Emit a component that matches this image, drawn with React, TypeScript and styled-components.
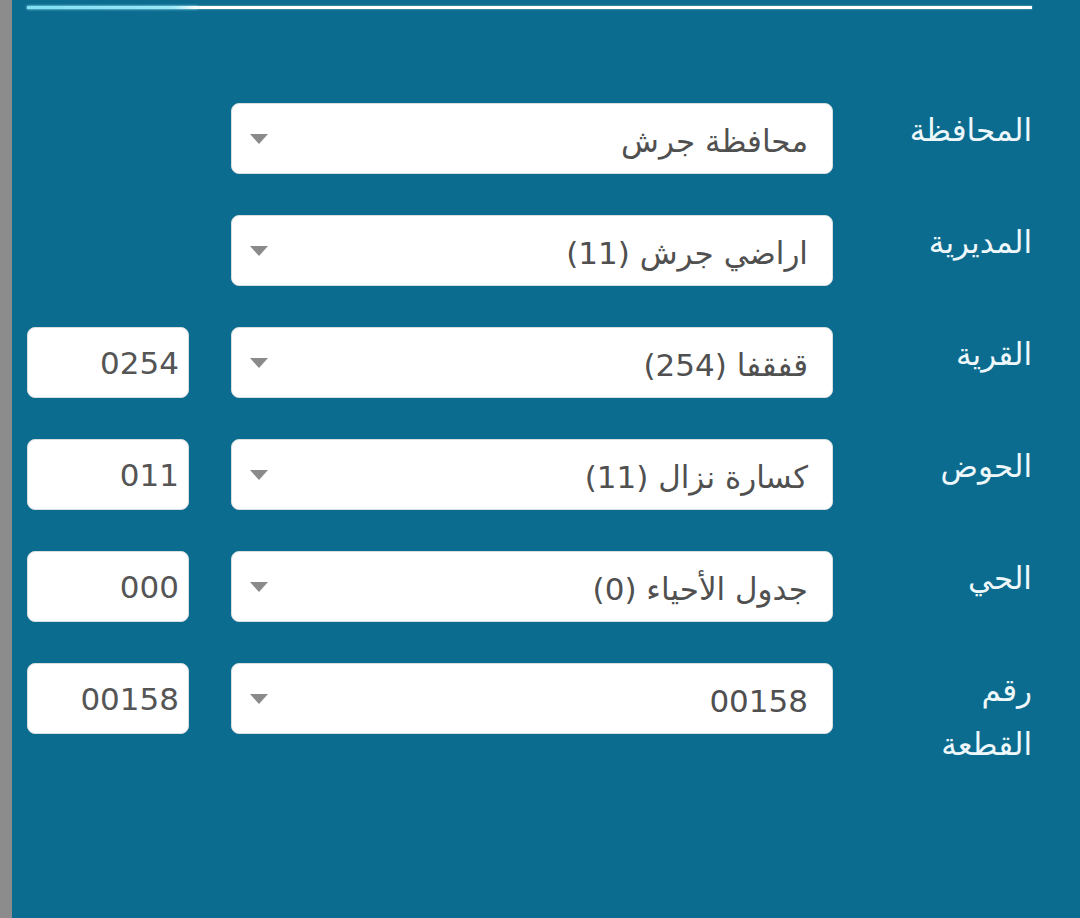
import React from "react";
import styled, { createGlobalStyle } from "styled-components";

const GlobalStyle = createGlobalStyle`
  html, body {
    margin: 0;
    padding: 0;
    background: #0b6c8f;
  }
  body {
    font-family: "DejaVu Sans", "Noto Sans", sans-serif;
  }
`;

const Shell = styled.div`
  display: flex;
  min-height: 918px;
  width: 1080px;
  background: #0b6c8f;
`;

const SideStrip = styled.div`
  width: 12px;
  flex: none;
  background: #8c8c8c;
`;

const Panel = styled.main`
  flex: 1;
  padding: 6px 48px 0 15px;
  display: flex;
  flex-direction: column;
`;

const ProgressTrack = styled.div`
  height: 3px;
  background: #ffffff;
  box-shadow: 0 0 2px rgba(255, 255, 255, 0.6);
`;

const ProgressFill = styled.div`
  height: 100%;
  background: linear-gradient(to right, #7fe0f4 0%, #9ae9f8 85%, #ffffff 100%);
  box-shadow: 0 0 3px rgba(127, 224, 244, 0.8);
`;

const Form = styled.form`
  direction: rtl;
  margin-top: 94px;
  display: flex;
  flex-direction: column;
  gap: 41px;
`;

const Row = styled.div`
  display: grid;
  grid-template-columns: 157px 602px 162px;
  column-gap: 42px;
  align-items: start;
`;

const Label = styled.label`
  color: #eef8fb;
  font-size: 31px;
  line-height: 54px;
  text-align: right;
  width: 140px;
`;

const SelectBox = styled.div`
  height: 71px;
  box-sizing: border-box;
  background: #ffffff;
  border: 1px solid #d9dee2;
  border-radius: 8px;
  display: flex;
  align-items: center;
  justify-content: space-between;
  padding: 4px 24px 0 18px;
  color: #505050;
  font-size: 31px;
  cursor: pointer;
`;

const SelectValue = styled.span`
  white-space: nowrap;
`;

const Caret = styled.span`
  width: 0;
  height: 0;
  border-left: 9px solid transparent;
  border-right: 9px solid transparent;
  border-top: 10px solid #8a8a8a;
  margin-top: -4px;
`;

const CodeInput = styled.input`
  height: 71px;
  width: 162px;
  box-sizing: border-box;
  background: #ffffff;
  border: 1px solid #d9dee2;
  border-radius: 8px;
  padding: 0 9px;
  text-align: right;
  direction: ltr;
  color: #555555;
  font-family: "DejaVu Sans", "Noto Sans", sans-serif;
  font-size: 31px;
  outline: none;
`;

const Spacer = styled.div``;

type Field = {
  label: string;
  value: string;
  code?: string;
};

const fields: Field[] = [
  { label: "المحافظة", value: "محافظة جرش" },
  { label: "المديرية", value: "اراضي جرش (11)" },
  { label: "القرية", value: "قفقفا (254)", code: "0254" },
  { label: "الحوض", value: "كسارة نزال (11)", code: "011" },
  { label: "الحي", value: "جدول الأحياء (0)", code: "000" },
  { label: "رقم القطعة", value: "00158", code: "00158" },
];

export default function App() {
  return (
    <>
      <GlobalStyle />
      <Shell>
        <SideStrip />
        <Panel>
          <ProgressTrack>
            <ProgressFill style={{ width: "17%" }} />
          </ProgressTrack>
          <Form onSubmit={(e) => e.preventDefault()}>
            {fields.map((f) => (
              <Row key={f.label}>
                <Label>{f.label}</Label>
                <SelectBox role="combobox" aria-label={f.label}>
                  <SelectValue>{f.value}</SelectValue>
                  <Caret />
                </SelectBox>
                {f.code ? (
                  <CodeInput readOnly value={f.code} aria-label={f.label} />
                ) : (
                  <Spacer />
                )}
              </Row>
            ))}
          </Form>
        </Panel>
      </Shell>
    </>
  );
}
